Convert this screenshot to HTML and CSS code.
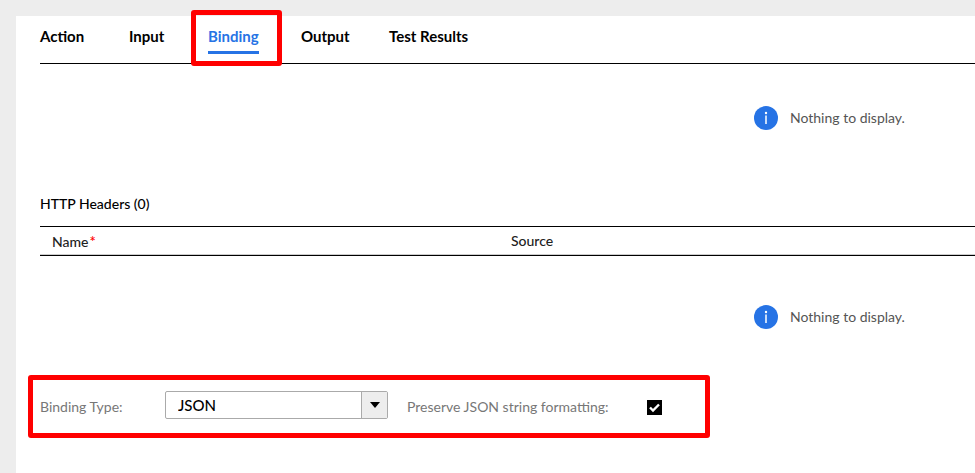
FILE: index.html
```html
<!DOCTYPE html>
<html lang="en">

<head>
    <meta charset="UTF-8">
    <title>Binding</title>
    <link rel="stylesheet" href="styles.css">
</head>

<body>
    <div class="panel">
        <nav class="tabs">
            <a href="#action">Action</a>
            <a href="#input">Input</a>
            <a href="#binding" class="active">Binding</a>
            <a href="#output">Output</a>
            <a href="#results">Test Results</a>
        </nav>

        <div class="empty">
            <svg class="info" viewBox="0 0 24 24">
                <circle cx="12" cy="12" r="12" fill="#2673e5" />
                <circle cx="12" cy="7" r="1.2" fill="#fff" />
                <path d="M12 9.5V18" stroke="#fff" stroke-width="1.5" />
            </svg>
            <span>Nothing to display.</span>
        </div>

        <h2>HTTP Headers (0)</h2>
        <table class="headers">
            <tr>
                <th class="name">Name<span class="required">*</span></th>
                <th>Source</th>
            </tr>
        </table>

        <div class="empty">
            <svg class="info" viewBox="0 0 24 24">
                <circle cx="12" cy="12" r="12" fill="#2673e5" />
                <circle cx="12" cy="7" r="1.2" fill="#fff" />
                <path d="M12 9.5V18" stroke="#fff" stroke-width="1.5" />
            </svg>
            <span>Nothing to display.</span>
        </div>

        <form class="binding-form">
            <label class="type-label" for="bindingtype">Binding Type:</label>
            <div class="select-box">
                <select id="bindingtype" name="bindingtype">
                    <option value="json">JSON</option>
                    <option value="xml">XML</option>
                </select>
                <span class="arrow"></span>
            </div>
            <label class="preserve-label" for="preserve">Preserve JSON string formatting:</label>
            <div class="check-box">
                <input type="checkbox" id="preserve" name="preserve" checked>
                <svg viewBox="0 0 15 15">
                    <path d="M3 7.5L6 10.5L12 4.5" fill="none" stroke="#fff" stroke-width="2.4" />
                </svg>
            </div>
        </form>
    </div>
</body>

</html>
```

FILE: styles.css
```css
body {
    font-family: Lato, "Liberation Sans", sans-serif;
    font-size: 14px;
    line-height: 20px;
    margin: 0;
    padding: 16px 0 0 16px;
    background-color: #ededed;
    color: #000;
}

.panel {
    box-sizing: border-box;
    min-height: calc(100vh - 16px);
    padding-left: 24px;
    background-color: #fff;
}

.tabs {
    display: grid;
    grid-template-columns: 89px 79px 93px 88px auto;
    justify-items: start;
    height: 47px;
    border-bottom: 1px solid #000;
    font-size: 15px;
}

.tabs a {
    height: 25px;
    padding-top: 10px;
    color: #000;
    font-weight: bold;
    text-decoration: none;
}

.tabs .active {
    position: relative;
    border-bottom: 3px solid #2673e5;
    color: #2673e5;
}

/* red frame round the current tab */
.tabs .active::after {
    content: "";
    position: absolute;
    top: -6px;
    left: -17px;
    right: -23px;
    bottom: -15px;
    border: 5px solid #f00;
    border-radius: 3px;
}

.empty {
    display: flex;
    align-items: center;
    gap: 12px;
    height: 24px;
    margin-left: 714px;
    padding: 42px 0 64px;
    color: #555;
}

.info {
    width: 24px;
    height: 24px;
}

h2 {
    margin: 0 0 12px;
    font-size: 14px;
    font-weight: 500;
}

.headers {
    width: 100%;
    border-collapse: collapse;
    border-top: 1px solid #000;
    border-bottom: 1px solid #000;
}

.headers th {
    height: 28px;
    padding: 0 12px;
    font-weight: 500;
    text-align: left;
    color: #222;
    box-shadow: inset 0 -1px #ccc;
}

.headers .name {
    width: 435px;
}

.required {
    margin-left: 1px;
    color: #f00;
    font-size: 15px;
}

.headers + .empty {
    padding: 49px 0 46px;
}

.binding-form {
    display: flex;
    align-items: center;
    box-sizing: border-box;
    width: 682px;
    height: 63px;
    margin-left: -12px;
    padding-left: 7px;
    border: 5px solid #f00;
    border-radius: 3px;
    color: #777;
}

.type-label {
    width: 125px;
}

.select-box {
    display: flex;
    box-sizing: border-box;
    width: 223px;
    height: 28px;
    margin: 0 19px 4px 0;
    position: relative;
    border: 1px solid #aaa;
    border-radius: 2px;
}

.select-box select {
    width: 100%;
    padding: 0 38px 0 12px;
    border: 0;
    background: none;
    appearance: none;
    color: #000;
    font-family: inherit;
    font-size: 15px;
    font-weight: 500;
}

.arrow {
    position: absolute;
    top: 0;
    right: 0;
    bottom: 0;
    display: flex;
    align-items: center;
    justify-content: center;
    width: 25px;
    border-left: 1px solid #aaa;
    background-color: #ededed;
    pointer-events: none;
}

.arrow::before {
    content: "";
    border: 5px solid transparent;
    border-top: 6px solid #000;
    border-bottom: 0;
}

.preserve-label {
    width: 240px;
}

.check-box {
    display: grid;
    width: 15px;
    height: 15px;
    margin-top: 2px;
}

.check-box input,
.check-box svg {
    grid-area: 1 / 1;
    width: 15px;
    height: 15px;
    margin: 0;
}

.check-box input {
    appearance: none;
    border: 1px solid #000;
}

.check-box input:checked {
    background-color: #000;
}

.check-box svg {
    pointer-events: none;
}
```
